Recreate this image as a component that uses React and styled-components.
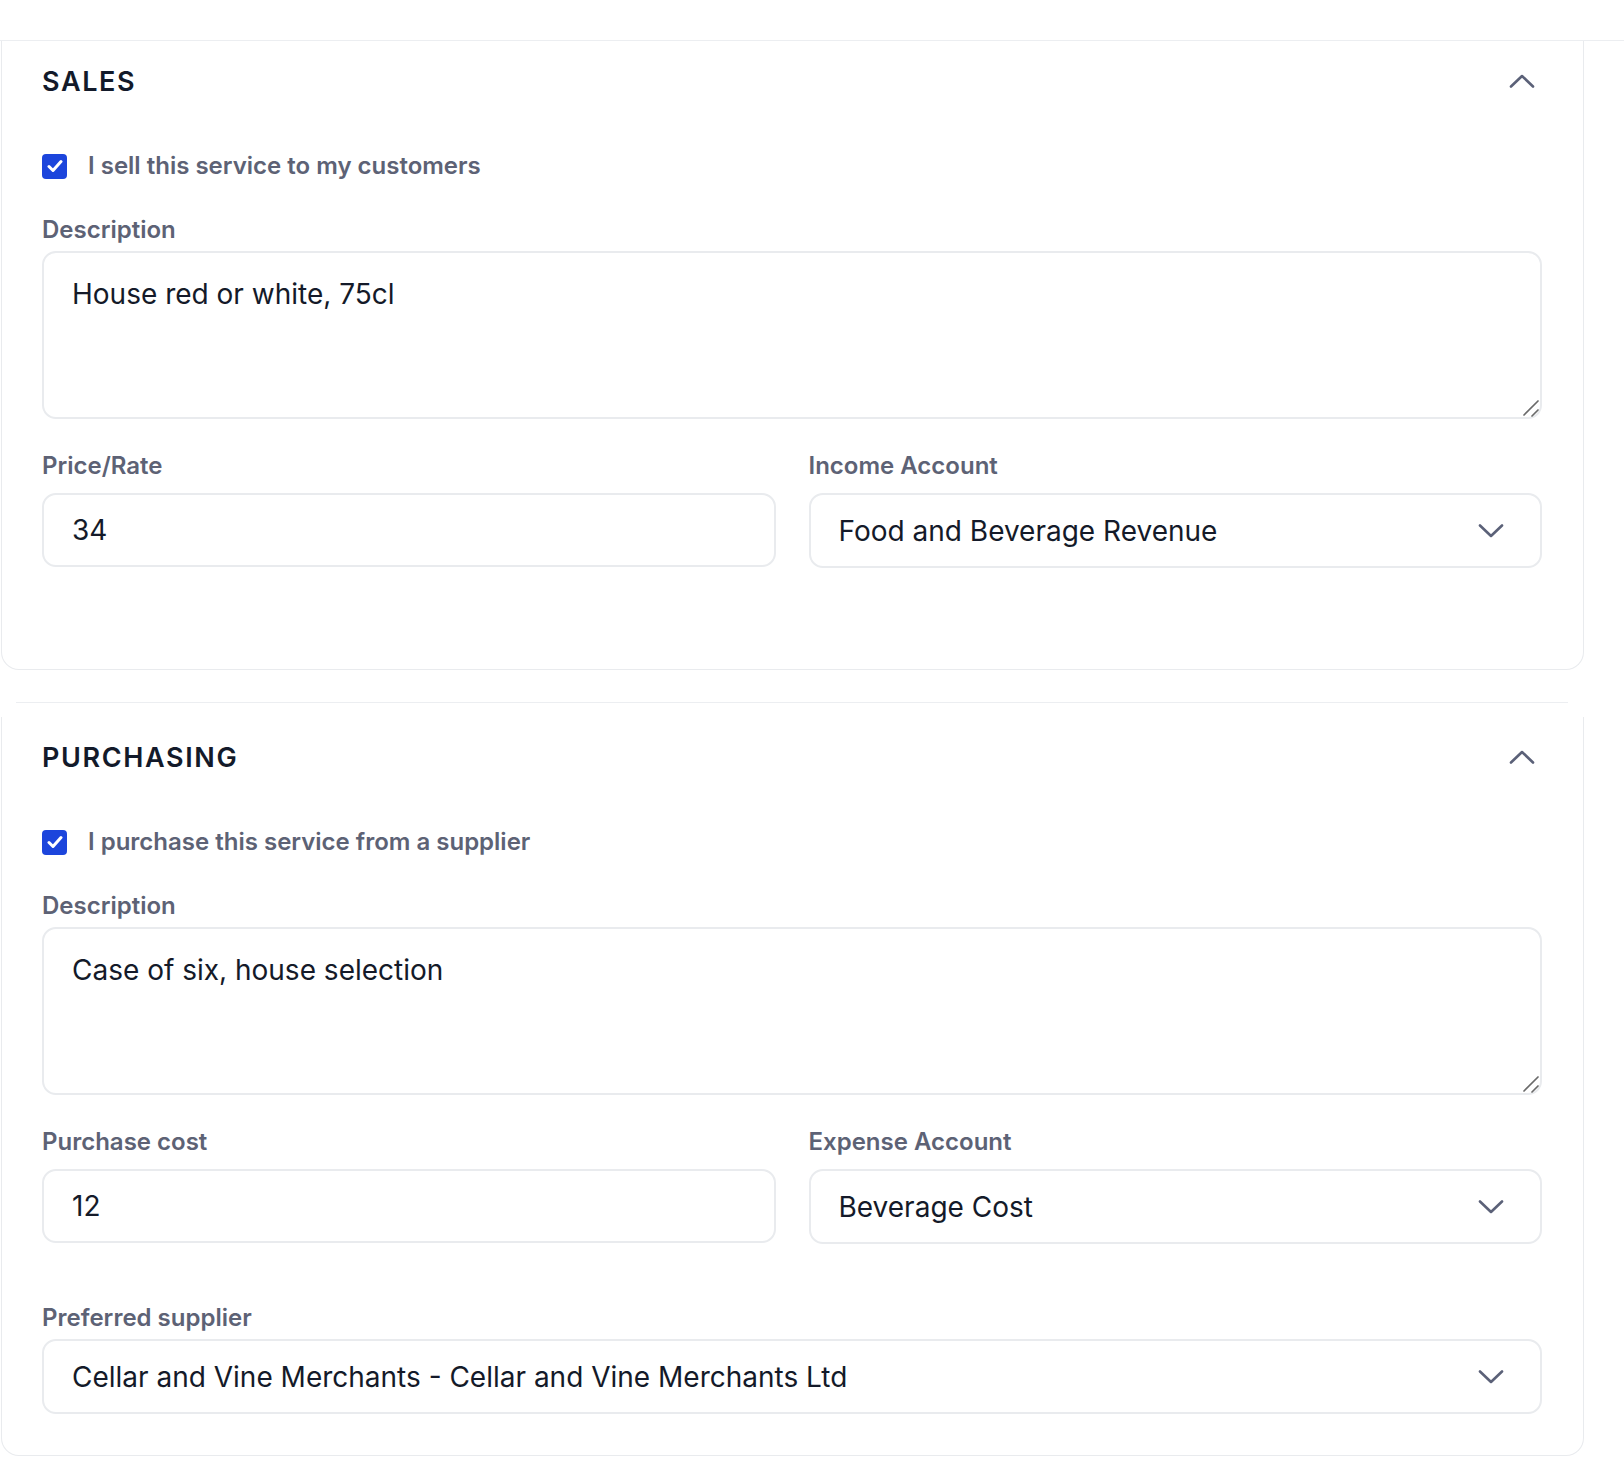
import styled, { createGlobalStyle } from "styled-components";

const GlobalStyle = createGlobalStyle`
  * { box-sizing: border-box; }
  body {
    margin: 0;
    background: #fff;
    font-family: Inter, "Noto Sans", sans-serif;
    color: #141a29;
  }
`;

const ChevronUp = () => (
  <svg width="26" height="14" viewBox="0 0 26 14" fill="none">
    <path d="M2 12.5L13 2L24 12.5" stroke="#5b6178" strokeWidth="2.6" strokeLinecap="round" strokeLinejoin="round" />
  </svg>
);

const ChevronDown = () => (
  <svg width="26" height="14" viewBox="0 0 26 14" fill="none">
    <path d="M2 1.5L13 12L24 1.5" stroke="#5b6178" strokeWidth="2.6" strokeLinecap="round" strokeLinejoin="round" />
  </svg>
);

const CheckMark = () => (
  <svg width="16" height="14" viewBox="0 0 16 14" fill="none">
    <path d="M2 7.5L6 11.5L14 2.5" stroke="#fff" strokeWidth="3" strokeLinecap="round" strokeLinejoin="round" />
  </svg>
);

const Grip = () => (
  <svg width="18" height="18" viewBox="0 0 18 18" fill="none">
    <path d="M2 16L16 2M10 17L16 11" stroke="#6a6a6a" strokeWidth="1.7" strokeLinecap="round" />
  </svg>
);

const Section = ({ title, checkLabel, description, left, right, children, first }) => (
  <>
    {!first && <Divider />}
    <Card $first={first}>
      <Header>
        <Title>{title}</Title>
        <Toggle type="button">
          <ChevronUp />
        </Toggle>
      </Header>
      <CheckRow>
        <Box>
          <CheckMark />
        </Box>
        <CheckText>{checkLabel}</CheckText>
      </CheckRow>
      <Label $top={33}>Description</Label>
      <AreaWrap>
        <TextArea defaultValue={description} />
        <Handle>
          <Grip />
        </Handle>
      </AreaWrap>
      <Grid>
        <div>
          <Label $top={0} $gap={11}>{left.label}</Label>
          <Input defaultValue={left.value} />
        </div>
        <div>
          <Label $top={0} $gap={11}>{right.label}</Label>
          <Select>
            <span>{right.value}</span>
            <ChevronDown />
          </Select>
        </div>
      </Grid>
      {children}
    </Card>
  </>
);

const App = () => {
  return (
    <>
      <GlobalStyle />
      <Page>
        <TopBar />
        <Section
          first
          title="SALES"
          checkLabel="I sell this service to my customers"
          description="House red or white, 75cl"
          left={{ label: "Price/Rate", value: "34" }}
          right={{ label: "Income Account", value: "Food and Beverage Revenue" }}
        >
          <Spacer $h={101} />
        </Section>
        <Section
          title="PURCHASING"
          checkLabel="I purchase this service from a supplier"
          description="Case of six, house selection"
          left={{ label: "Purchase cost", value: "12" }}
          right={{ label: "Expense Account", value: "Beverage Cost" }}
        >
          <Label $top={58}>Preferred supplier</Label>
          <Select>
            <span>Cellar and Vine Merchants - Cellar and Vine Merchants Ltd</span>
            <ChevronDown />
          </Select>
          <Spacer $h={41} />
        </Section>
      </Page>
    </>
  );
};

export default App;

/* ---------------------------- STYLED COMPONENTS --------------------------- */

const Page = styled.div`
  width: 1624px;
  padding-bottom: 24px;
`;

const TopBar = styled.div`
  height: 41px;
  border-bottom: 1px solid #eceef1;
`;

const Divider = styled.div`
  height: 1px;
  margin: 32px 56px 0 16px;
  background: #eceef1;
`;

const Card = styled.section`
  width: 1583px;
  margin: ${(p) => (p.$first ? "0" : "14px")} 0 0 1px;
  padding: 0 41px 0 40px;
  border: 1.5px solid #e9ebee;
  border-top: none;
  border-radius: 0 0 18px 18px;
  background: #fff;
`;

const Header = styled.div`
  height: 80px;
  display: flex;
  align-items: center;
  justify-content: space-between;
`;

const Title = styled.h2`
  margin: 0;
  font-size: 27px;
  font-weight: 600;
  letter-spacing: 0.06em;
  color: #131a2a;
`;

const Toggle = styled.button`
  display: flex;
  align-items: center;
  margin-right: 7px;
  padding: 0;
  border: none;
  background: transparent;
  cursor: pointer;
`;

const CheckRow = styled.label`
  margin-top: 28px;
  height: 32px;
  display: flex;
  align-items: center;
  gap: 21px;
`;

const Box = styled.span`
  width: 25px;
  height: 25px;
  margin-top: 2px;
  border-radius: 4px;
  background: #1c45dc;
  display: flex;
  align-items: center;
  justify-content: center;
`;

const CheckText = styled.span`
  font-size: 24px;
  font-weight: 600;
  color: #5d6275;
`;

const Label = styled.div`
  margin-top: ${(p) => p.$top}px;
  margin-bottom: ${(p) => p.$gap ?? 5}px;
  font-size: 24px;
  line-height: 32px;
  font-weight: 600;
  color: #5d6275;
`;

const fieldBase = `
  width: 100%;
  border: 2px solid #e9ebee;
  border-radius: 14px;
  background: #fff;
  font-family: Inter, "Noto Sans", sans-serif;
  font-size: 28px;
  color: #141a29;
  outline: none;
`;

const AreaWrap = styled.div`
  position: relative;
`;

const TextArea = styled.textarea`
  ${fieldBase}
  display: block;
  height: 168px;
  padding: 20px 28px;
  line-height: 42px;
  resize: none;
`;

const Handle = styled.span`
  position: absolute;
  right: 2px;
  bottom: 2px;
  display: flex;
  pointer-events: none;
`;

const Grid = styled.div`
  margin-top: 31px;
  display: grid;
  grid-template-columns: 1fr 1fr;
  gap: 33px;
`;

const Input = styled.input`
  ${fieldBase}
  display: block;
  height: 74px;
  padding: 0 28px;
`;

const Select = styled.div`
  ${fieldBase}
  height: 75px;
  padding: 0 36px 0 28px;
  display: flex;
  align-items: center;
  justify-content: space-between;
`;

const Spacer = styled.div`
  height: ${(p) => p.$h}px;
`;
